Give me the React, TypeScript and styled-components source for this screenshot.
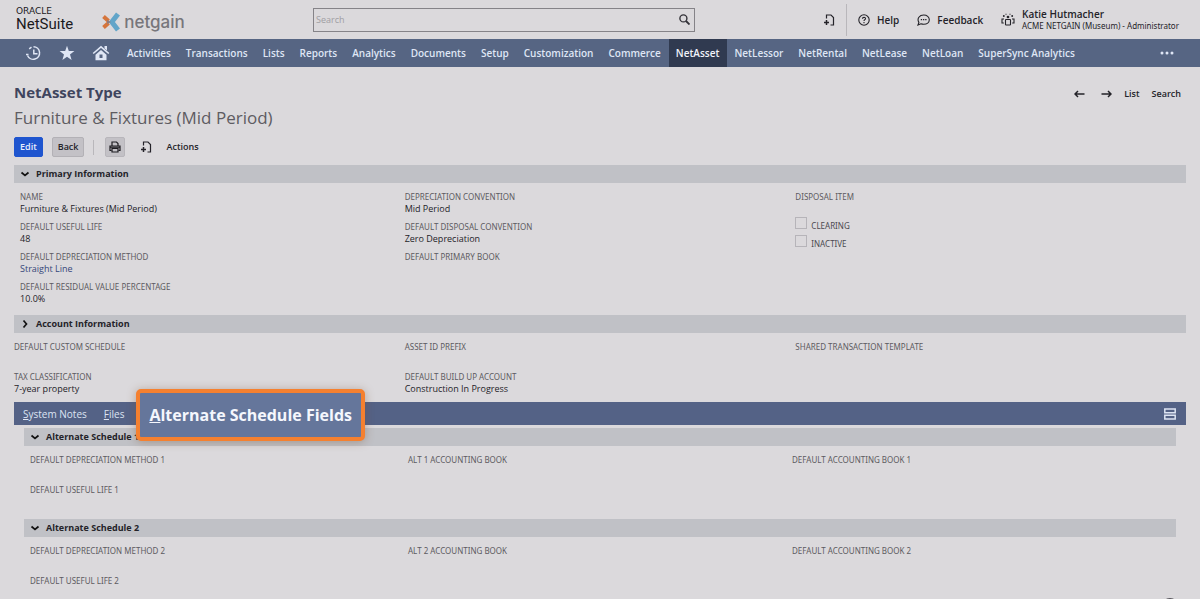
import React from "react";
import styled, { createGlobalStyle, css } from "styled-components";

const GlobalStyle = createGlobalStyle`
  * { box-sizing: border-box; }
  body {
    margin: 0;
    background: #dbd9dc;
    color: #242329;
    font-family: "Open Sans", "Noto Sans", sans-serif;
    font-size: 9px;
    line-height: 12px;
  }
  button, input { font: inherit; color: inherit; }
  a { color: inherit; text-decoration: none; }
  h1, h2, h3, p, ul, dl, dd { margin: 0; padding: 0; }
`;

const Header = styled.header`
  display: grid;
  grid-template-columns: 299fr 382fr 491fr;
  align-items: center;
  height: 39px;
  padding: 0 14px;
`;

const Brands = styled.div`
  display: flex;
  align-items: center;
  gap: 29px;
  padding-left: 2px;
`;

const OracleLogo = styled.a`
  display: flex;
  flex-direction: column;
  color: #1b1a1e;
`;

const OracleWord = styled.span`
  font: 9px/10px "DejaVu Sans", sans-serif;
`;

const SuiteWord = styled.span`
  font: 400 15px/17px Roboto, sans-serif;
`;

const NetgainLogo = styled.a`
  display: flex;
  align-items: center;
  gap: 4px;
  padding-top: 4px;
  color: #77767b;
  font: 500 17px/20px Inter, sans-serif;
`;

const SearchBox = styled.form`
  display: flex;
  align-items: center;
  height: 24px;
  border: 1px solid #858388;
`;

const SearchInput = styled.input`
  flex: 1;
  min-width: 0;
  padding: 0 2px;
  border: 0;
  outline: 0;
  background: transparent;
  &::placeholder { color: #a09ea3; opacity: 1; }
`;

const IconButton = styled.button`
  display: flex;
  align-items: center;
  justify-content: center;
  padding: 0;
  border: 0;
  background: transparent;
`;

const SearchButton = styled(IconButton)`
  width: 20px;
`;

const HeaderTools = styled.div`
  display: flex;
  align-items: center;
  justify-content: flex-end;
  padding-right: 7px;
`;

const ToolDivider = styled.span`
  width: 1px;
  height: 32px;
  margin: 0 11px;
  background: #b9b7bb;
`;

const ToolLink = styled.a`
  display: flex;
  align-items: center;
  gap: 7px;
  margin-right: 18px;
  font-size: 10px;
  font-weight: 600;
`;

const UserLink = styled.a`
  display: flex;
  align-items: center;
  gap: 7px;
`;

const UserText = styled.span`
  display: flex;
  flex-direction: column;
  font-family: "Noto Sans", "Open Sans", sans-serif;
  font-size: 8px;
  white-space: nowrap;
`;

const UserName = styled.strong`
  font-family: "Open Sans", "Noto Sans", sans-serif;
  font-size: 10px;
  font-weight: 600;
`;

const Nav = styled.nav`
  display: flex;
  align-items: stretch;
  height: 28px;
  padding: 0 26px 0 24px;
  background: #566583;
  color: #dfe6f5;
`;

const NavIcons = styled.div`
  display: flex;
  align-items: center;
  gap: 17px;
  margin-right: 10px;
`;

const NavLink = styled.a<{ $active?: boolean }>`
  display: flex;
  align-items: center;
  padding: 0 8px 0 7px;
  font-size: 10px;
  font-weight: 600;
  white-space: nowrap;
  ${(p) => p.$active && css`background: #303a50; color: #f1f3fa;`}
`;

const MoreButton = styled(IconButton)`
  margin-left: auto;
`;

const Page = styled.main`
  padding: 14px 14px 8px;
`;

const TitleRow = styled.div`
  display: flex;
  justify-content: space-between;
`;

const RecordType = styled.h1`
  margin-bottom: 2px;
  color: #3f455e;
  font-size: 15px;
  line-height: 22px;
  font-weight: 700;
`;

const RecordName = styled.h2`
  color: #5e5c62;
  font-size: 17px;
  line-height: 26px;
  font-weight: 400;
`;

const Pager = styled.div`
  display: flex;
  align-items: center;
  gap: 12px;
  height: 26px;
  padding-right: 5px;
  font-weight: 600;
`;

const PagerArrows = styled.div`
  display: flex;
  gap: 16px;
`;

const Actions = styled.div`
  display: flex;
  align-items: center;
  height: 20px;
  margin: 6px 0 8px;
`;

const ActionButton = styled.button<{ $primary?: boolean }>`
  height: 20px;
  margin-right: 9px;
  padding: 0 5px;
  border: 1px solid ${(p) => (p.$primary ? "#1f55cf" : "#b3b1b6")};
  border-radius: 2px;
  background: ${(p) => (p.$primary ? "#1f55cf" : "#c3c1c6")};
  color: ${(p) => (p.$primary ? "#e8eefc" : "#242329")};
  font-weight: 600;
`;

const ActionDivider = styled.span`
  width: 1px;
  height: 15px;
  margin-right: 11px;
  background: #b9b7bb;
`;

const PrintButton = styled(IconButton)`
  width: 20px;
  height: 20px;
  margin-right: 15px;
  border: 1px solid #b8b6bb;
  border-radius: 2px;
  background: #c3c1c6;
`;

const ActionMenu = styled(IconButton)`
  margin-left: 14px;
  font-weight: 600;
`;

const SectionHeading = styled.h3`
  font-size: 9px;
`;

const SectionBar = styled.button`
  display: flex;
  align-items: center;
  gap: 6px;
  width: 100%;
  height: 18px;
  padding: 0 6px;
  border: 0;
  background: #c0c1c6;
  text-align: left;
`;

const Fields = styled.div<{ $indent?: boolean; $bottom: number }>`
  display: grid;
  grid-template-columns: repeat(3, 1fr);
  padding: 8px 0 ${(p) => p.$bottom}px;
  ${(p) => p.$indent && css`& > :first-child { padding-left: 6px; }`}
`;

const Column = styled.dl`
  display: flex;
  flex-direction: column;
  gap: 6px;
`;

const Field = styled.div`
  min-height: 24px;
`;

const Label = styled.dt`
  color: #5d5b61;
  font-family: "Noto Sans", "Open Sans", sans-serif;
  font-size: 8px;
`;

const Value = styled.dd``;

const ValueLink = styled.a`
  color: #36477a;
`;

const Checks = styled.div`
  display: flex;
  flex-direction: column;
  gap: 3px;
  padding-top: 2px;
`;

const CheckLabel = styled.label`
  display: flex;
  align-items: flex-end;
  gap: 4px;
  height: 15px;
  color: #4b4950;
  font-family: "Noto Sans", "Open Sans", sans-serif;
  font-size: 8px;
`;

const Checkbox = styled.input`
  appearance: none;
  align-self: flex-start;
  width: 12px;
  height: 12px;
  margin: 0;
  border: 1px solid #b6b4b9;
`;

const TabBar = styled.div`
  display: flex;
  align-items: center;
  height: 23px;
  padding: 0 10px 0 9px;
  background: #546286;
  color: #dde4f3;
`;

const Tab = styled.button`
  margin-right: 17px;
  padding: 0;
  border: 0;
  background: transparent;
  font-size: 10px;
`;

const ActiveTabSlot = styled.div`
  position: relative;
  align-self: stretch;
`;

const ActiveTab = styled.button`
  position: absolute;
  top: -13px;
  left: -5px;
  height: 52px;
  padding: 0 9px;
  border: 4px solid #f5802f;
  border-radius: 5px;
  background: #65769b;
  box-shadow: 0 1px 10px rgba(120, 80, 50, 0.4);
  color: #f5f7fd;
  font-size: 16px;
  line-height: 24px;
  font-weight: 700;
  white-space: nowrap;
`;

const LayoutButton = styled(IconButton)`
  margin-left: auto;
`;

const TabPanel = styled.div`
  padding: 3px 10px 0;
`;

const ChatBubble = styled.span`
  position: fixed;
  right: 22px;
  bottom: -15px;
  width: 16px;
  height: 16px;
  border-radius: 50%;
  background: #55545a;
`;

const AddNoteIcon = () => (
  <svg width="12" height="12" viewBox="0 0 12 12" fill="none" stroke="currentColor" strokeWidth="1.2">
    <path d="M3.5 4.5V1H8l2.500 2.500V11H7.500" />
    <path d="M3.500 6v5M1 8.500h5" strokeWidth="1.500" />
  </svg>
);

const Arrow = ({ flip }: { flip?: boolean }) => (
  <svg width="11" height="8" viewBox="0 0 11 8" fill="none" stroke="currentColor" strokeWidth="1.5">
    <path d={flip ? "M0.5 4h9M7 1l3 3-3 3" : "M10.5 4h-9M4 1L1 4l3 3"} />
  </svg>
);

const Chevron = ({ open }: { open: boolean }) => (
  <svg width="10" height="10" viewBox="0 0 10 10" fill="none" stroke="#111" strokeWidth="1.7">
    <path d={open ? "M1.500 3.500L5 6.500l3.500-3" : "M3.500 1.500L6.500 5l-3 3.500"} />
  </svg>
);

type Item = { label: string; value?: string; link?: boolean };

const FieldColumn = ({ items, children }: { items: Item[]; children?: React.ReactNode }) => (
  <div>
    <Column>
      {items.map((f) => (
        <Field key={f.label}>
          <Label>{f.label}</Label>
          {f.value && <Value>{f.link ? <ValueLink href="#">{f.value}</ValueLink> : f.value}</Value>}
        </Field>
      ))}
    </Column>
    {children}
  </div>
);

const Section = ({ title, open = true }: { title: string; open?: boolean }) => (
  <SectionHeading>
    <SectionBar type="button" aria-expanded={open}>
      <Chevron open={open} />
      {title}
    </SectionBar>
  </SectionHeading>
);

const navItems = [
  "Activities", "Transactions", "Lists", "Reports", "Analytics", "Documents", "Setup",
  "Customization", "Commerce", "NetAsset", "NetLessor", "NetRental", "NetLease", "NetLoan",
  "SuperSync Analytics",
];

export default function App() {
  return (
    <>
      <GlobalStyle />
      <Header>
        <Brands>
          <OracleLogo href="#">
            <OracleWord>ORACLE</OracleWord>
            <SuiteWord>NetSuite</SuiteWord>
          </OracleLogo>
          <NetgainLogo href="#">
            <svg width="18" height="20" viewBox="0 0 18 20" fill="none">
              <path d="M16 2L9.800 10l6.200 8" stroke="#62a5c9" strokeWidth="5" />
              <path d="M1.500 4.500l5 4.500M1.500 15.500l5-4.500" stroke="#d5753c" strokeWidth="4" />
              <path d="M5 8L9 10l-4 2z" fill="#8b7b80" />
            </svg>
            netgain
          </NetgainLogo>
        </Brands>
        <SearchBox role="search">
          <SearchInput type="search" placeholder="Search" aria-label="Search" />
          <SearchButton type="button" aria-label="Run search">
            <svg width="11" height="11" viewBox="0 0 11 11" fill="none" stroke="#333238" strokeWidth="1.4">
              <circle cx="4.4" cy="4.4" r="3.5" />
              <path d="M7 7l3.5 3.5" strokeWidth="1.8" />
            </svg>
          </SearchButton>
        </SearchBox>
        <HeaderTools>
          <IconButton type="button" aria-label="Create new"><AddNoteIcon /></IconButton>
          <ToolDivider />
          <ToolLink href="#">
            <svg width="12" height="12" viewBox="0 0 12 12" fill="none" stroke="currentColor">
              <circle cx="6" cy="6" r="5.2" strokeWidth="1.1" />
              <path d="M4.4 4.8C4.5 2.8 7.6 2.9 7.5 4.7 7.4 5.7 6 5.7 6 7M6 8v1.2" strokeWidth="1.1" />
            </svg>
            Help
          </ToolLink>
          <ToolLink href="#">
            <svg width="13" height="12" viewBox="0 0 13 12" fill="none" stroke="currentColor">
              <path d="M1 11l.9-2.6C-.4 4.500 2.500 1 6.700 1c3.200 0 5.600 2 5.600 4.700S9.900 10.300 6.700 10.300c-1 0-2-.2-2.800-.5z" strokeWidth="1.1" />
              <path d="M3.800 5.700h1.300M6 5.700h1.300M8.200 5.700h1.300" strokeWidth="1.3" />
            </svg>
            Feedback
          </ToolLink>
          <UserLink href="#">
            <svg width="14" height="13" viewBox="0 0 14 13" fill="none" stroke="currentColor" strokeWidth="1.1">
              <rect x="4.500" y="6.500" width="5" height="5.500" rx=".6" />
              <path d="M2.800 10H1V6h2M11.200 10H13V6h-2" />
              <circle cx="7" cy="4" r=".8" fill="currentColor" />
              <circle cx="2.800" cy="3" r=".4" fill="currentColor" />
              <circle cx="11.200" cy="3" r=".4" fill="currentColor" />
              <path d="M4.500 1.300h1M8.500 1.300h1" />
            </svg>
            <UserText>
              <UserName>Katie Hutmacher</UserName>
              ACME NETGAIN (Museum) - Administrator
            </UserText>
          </UserLink>
        </HeaderTools>
      </Header>
      <Nav aria-label="Main">
        <NavIcons>
          <IconButton type="button" aria-label="Recent records">
            <svg width="18" height="16" viewBox="0 0 18 16" fill="none" stroke="#dfe6f5" strokeWidth="1.500">
              <path d="M9.500 1.700A6.300 6.300 0 1 1 3.500 10.500M9.800 4.500v4.200h3.700" />
              <path d="M5.200 3.800L7.500 2.200M2 9.500h2.500" />
            </svg>
          </IconButton>
          <IconButton type="button" aria-label="Shortcuts">
            <svg width="16" height="16" viewBox="0 0 16 16" fill="#dfe6f5">
              <path d="M8 .8l1.800 5.100 5.600.200-4.400 3.400 1.600 5.400L8 11.800l-4.600 3.100L5 9.500.6 6.100l5.600-.2z" />
            </svg>
          </IconButton>
          <IconButton type="button" aria-label="Home">
            <svg width="18" height="16" viewBox="0 0 18 16" fill="#dfe6f5">
              <path d="M1.200 8.500L9 1.800l7.800 6.700" fill="none" stroke="#dfe6f5" strokeWidth="1.600" />
              <path d="M12.500 1H15v4.500l-2.500-2z" />
              <path d="M9 5l5.500 4.800v5.400h-11V9.800z" />
              <path d="M7.500 9.500h3V13h-3z" fill="#566583" />
            </svg>
          </IconButton>
        </NavIcons>
        {navItems.map((n) => (
          <NavLink key={n} href="#" $active={n === "NetAsset"}>{n}</NavLink>
        ))}
        <MoreButton type="button" aria-label="More">
          <svg width="14" height="4" viewBox="0 0 14 4" fill="#dfe6f5">
            <circle cx="2" cy="2" r="1.500" /><circle cx="7" cy="2" r="1.500" /><circle cx="12" cy="2" r="1.500" />
          </svg>
        </MoreButton>
      </Nav>
      <Page>
        <TitleRow>
          <div>
            <RecordType>NetAsset Type</RecordType>
            <RecordName>Furniture &amp; Fixtures (Mid Period)</RecordName>
          </div>
          <Pager>
            <PagerArrows>
              <IconButton type="button" aria-label="Previous record"><Arrow /></IconButton>
              <IconButton type="button" aria-label="Next record"><Arrow flip /></IconButton>
            </PagerArrows>
            <a href="#">List</a>
            <a href="#">Search</a>
          </Pager>
        </TitleRow>
        <Actions>
          <ActionButton type="button" $primary>Edit</ActionButton>
          <ActionButton type="button">Back</ActionButton>
          <ActionDivider />
          <PrintButton type="button" aria-label="Print">
            <svg width="12" height="12" viewBox="0 0 12 12" fill="none" stroke="#1d1c21" strokeWidth="1.200">
              <path d="M3 5V1h4.500L9 2.500V5" />
              <path d="M2.500 9.500H1V5h10v4.500H9.500" />
              <path d="M3 7.500h6V11H3z" />
              <path d="M1 6.200h10" />
            </svg>
          </PrintButton>
          <IconButton type="button" aria-label="New"><AddNoteIcon /></IconButton>
          <ActionMenu type="button">Actions</ActionMenu>
        </Actions>

        <Section title="Primary Information" />
        <Fields $indent $bottom={10}>
          <FieldColumn
            items={[
              { label: "NAME", value: "Furniture & Fixtures (Mid Period)" },
              { label: "DEFAULT USEFUL LIFE", value: "48" },
              { label: "DEFAULT DEPRECIATION METHOD", value: "Straight Line", link: true },
              { label: "DEFAULT RESIDUAL VALUE PERCENTAGE", value: "10.0%" },
            ]}
          />
          <FieldColumn
            items={[
              { label: "DEPRECIATION CONVENTION", value: "Mid Period" },
              { label: "DEFAULT DISPOSAL CONVENTION", value: "Zero Depreciation" },
              { label: "DEFAULT PRIMARY BOOK" },
            ]}
          />
          <FieldColumn items={[{ label: "DISPOSAL ITEM" }]}>
            <Checks>
              <CheckLabel><Checkbox type="checkbox" />CLEARING</CheckLabel>
              <CheckLabel><Checkbox type="checkbox" />INACTIVE</CheckLabel>
            </Checks>
          </FieldColumn>
        </Fields>

        <Section title="Account Information" open={false} />
        <Fields $bottom={7}>
          <FieldColumn
            items={[
              { label: "DEFAULT CUSTOM SCHEDULE" },
              { label: "TAX CLASSIFICATION", value: "7-year property" },
            ]}
          />
          <FieldColumn
            items={[
              { label: "ASSET ID PREFIX" },
              { label: "DEFAULT BUILD UP ACCOUNT", value: "Construction In Progress" },
            ]}
          />
          <FieldColumn items={[{ label: "SHARED TRANSACTION TEMPLATE" }]} />
        </Fields>

        <TabBar>
          <Tab type="button"><u>S</u>ystem Notes</Tab>
          <Tab type="button"><u>F</u>iles</Tab>
          <ActiveTabSlot>
            <ActiveTab type="button"><u>A</u>lternate Schedule Fields</ActiveTab>
          </ActiveTabSlot>
          <LayoutButton type="button" aria-label="Toggle layout">
            <svg width="12" height="12" viewBox="0 0 12 12" fill="none" stroke="#dde4f3" strokeWidth="1.500">
              <path d="M.8 1h10.400v3.800H.8zM.8 7.200h10.400V11H.8z" />
            </svg>
          </LayoutButton>
        </TabBar>
        <TabPanel>
          {[1, 2].map((n) => (
            <section key={n}>
              <Section title={`Alternate Schedule ${n}`} />
              <Fields $indent $bottom={11}>
                <FieldColumn
                  items={[
                    { label: `DEFAULT DEPRECIATION METHOD ${n}` },
                    { label: `DEFAULT USEFUL LIFE ${n}` },
                  ]}
                />
                <FieldColumn items={[{ label: `ALT ${n} ACCOUNTING BOOK` }]} />
                <FieldColumn items={[{ label: `DEFAULT ACCOUNTING BOOK ${n}` }]} />
              </Fields>
            </section>
          ))}
        </TabPanel>
      </Page>
      <ChatBubble />
    </>
  );
}
